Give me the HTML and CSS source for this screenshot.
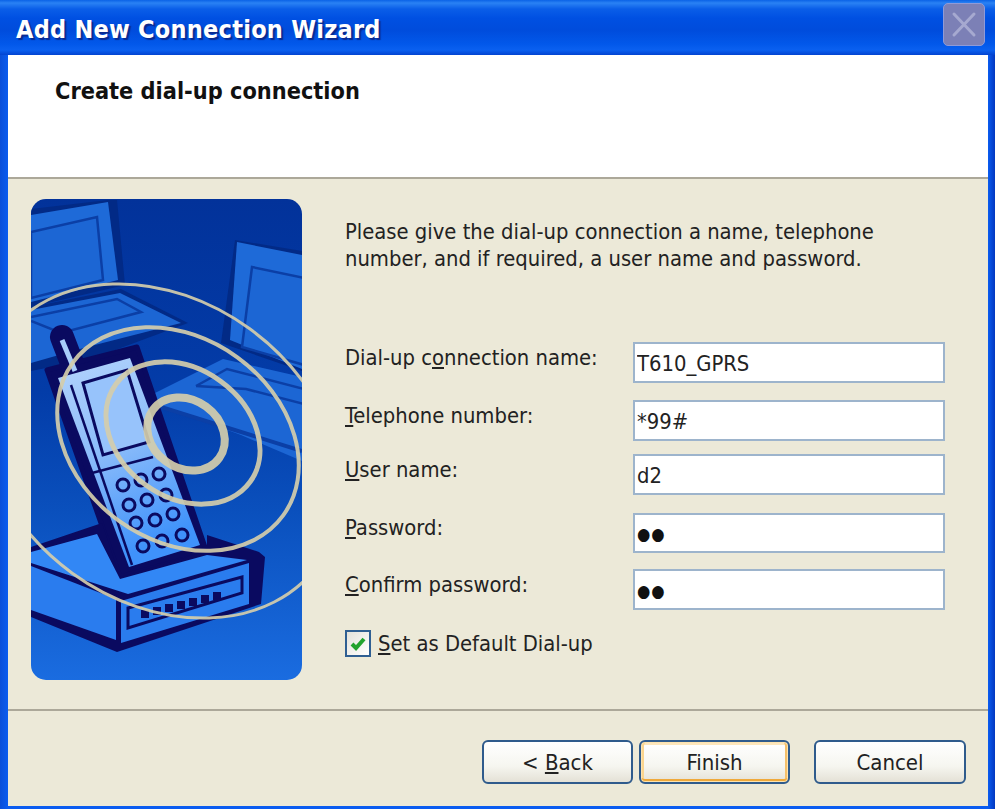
FILE: index.html
```html
<!DOCTYPE html>
<html lang="en">
<head>
<meta charset="utf-8">
<title>Add New Connection Wizard</title>
<link rel="stylesheet" href="styles.css">
</head>
<body>
<div class="window">
  <div class="titlebar">
    <span class="title">Add New Connection Wizard</span>
    <span class="close">
      <svg viewBox="0 0 42 43" width="42" height="43"><path d="M11 11 L31 32 M31 11 L11 32" stroke="#a6a9d0" stroke-width="3" fill="none" stroke-linecap="round"/></svg>
    </span>
  </div>
  <div class="client">
    <div class="header"><h1 class="heading">Create dial-up connection</h1></div>
    <div class="main">
      <svg class="art" viewBox="0 0 271 481" width="271" height="481">
        <defs>
          <linearGradient id="bg" x1="0" y1="0" x2="0" y2="1">
            <stop offset="0" stop-color="#02329a"/>
            <stop offset="0.4" stop-color="#033ca8"/>
            <stop offset="0.65" stop-color="#0a50bd"/>
            <stop offset="1" stop-color="#1a6ce0"/>
          </linearGradient>
          <linearGradient id="face" x1="0" y1="0" x2="0.3" y2="1">
            <stop offset="0" stop-color="#b4d4fc"/>
            <stop offset="0.5" stop-color="#8bbcfa"/>
            <stop offset="1" stop-color="#3f92fb"/>
          </linearGradient>
        </defs>
        <rect width="271" height="481" fill="url(#bg)"/>
        <polygon points="0,10 77,1 86,1 94,86 0,108" fill="#022a86"/>
        <polygon points="0,16 77,3 87,81 0,103" fill="#1e6ad8"/>
        <polygon points="0,33 66,18 72,81 0,99" fill="#1c66d4" stroke="#0b3fa6" stroke-width="2.5"/>
        <polygon points="0,108 90,90 157,124 60,160 0,172" fill="#022a86"/>
        <polygon points="0,111 89,94 150,124 56,148 0,164" fill="#1c66d4"/>
        <polyline points="0,118 86,100 110,113 30,134 0,122" fill="none" stroke="#0b3fa6" stroke-width="2.5"/>
        <polygon points="204,41 271,52 271,172 190,144" fill="#022a86"/>
        <polygon points="206,43 271,56 271,170 199,141" fill="#1e6ad8"/>
        <polygon points="221,68 273,79 273,166 211,148" fill="#1c66d4" stroke="#0b3fa6" stroke-width="2.5"/>
        <polygon points="112,200 192,160 271,178 271,262 210,236" fill="#1c66d4"/>
        <polyline points="165,187 196,170 273,190 273,205 215,190 165,187" fill="none" stroke="#0b3fa6" stroke-width="2.5"/>
        <line x1="130" y1="208" x2="271" y2="252" stroke="#0b3fa6" stroke-width="4"/>

        <line x1="31" y1="138" x2="44" y2="172" stroke="#0a0a60" stroke-width="24" stroke-linecap="round"/>
        <polygon points="16,171 106,148 176,354 89,378" fill="#0a0a60" stroke="#0a0a60" stroke-width="5" stroke-linejoin="round"/>
        <polygon points="27,179 99,159 169,346 98,368" fill="url(#face)"/>
        <line x1="31" y1="141" x2="44" y2="172" stroke="#a8cdfb" stroke-width="5"/>
        <line x1="40" y1="186" x2="101" y2="366" stroke="#0a0a60" stroke-width="2.5"/>
        <polygon points="52,184 96,171 118,243 72,256" fill="#97c3fb" stroke="#0a0a60" stroke-width="3"/>
        <line x1="61" y1="274" x2="122" y2="258" stroke="#0a0a60" stroke-width="2.5"/>
        <g fill="none" stroke="#0a0a60" stroke-width="3">
          <circle cx="92" cy="286" r="6"/><circle cx="110" cy="281" r="6"/><circle cx="128" cy="275" r="6"/>
          <circle cx="98" cy="306" r="6"/><circle cx="116" cy="301" r="6"/><circle cx="135" cy="296" r="6"/>
          <circle cx="105" cy="324" r="6"/><circle cx="124" cy="321" r="6"/><circle cx="142" cy="315" r="6"/>
          <circle cx="112" cy="347" r="6"/><circle cx="131" cy="342" r="6"/><circle cx="151" cy="336" r="6"/>
        </g>

        <polygon points="0,348 71,324 89,378 176,352 176,336 228,353 234,358 230,405 86,453 0,418" fill="#0a0a60" stroke-linejoin="round"/>
        <polygon points="0,353 66,335 89,380 176,356 216,361 97,395 0,364" fill="#3287f5"/>
        <polygon points="0,367 85,400 85,441 0,411" fill="#2a7cee"/>
        <polygon points="90,402 218,364 218,405 90,444" fill="#2a7cee"/>
        <polygon points="97,409 211,378 211,394 97,429" fill="#2a7cee" stroke="#0a0a60" stroke-width="3"/>
        <g fill="#0a0a60">
          <rect x="110" y="411" width="8" height="8"/><rect x="122" y="408" width="8" height="8"/>
          <rect x="134" y="405" width="8" height="8"/><rect x="146" y="402" width="8" height="8"/>
          <rect x="158" y="399" width="8" height="8"/><rect x="170" y="396" width="8" height="8"/>
          <rect x="182" y="393" width="8" height="8"/>
        </g>
        <g fill="none" stroke="#d4cdab" stroke-opacity="0.92">
          <ellipse cx="155" cy="235" rx="41" ry="34" stroke-width="8" transform="rotate(36 155 235)"/>
          <ellipse cx="152" cy="234" rx="83" ry="64" stroke-width="5" transform="rotate(36 152 234)"/>
          <ellipse cx="147" cy="240" rx="130" ry="101" stroke-width="4" transform="rotate(36 147 240)"/>
          <ellipse cx="130" cy="252" rx="194" ry="151" stroke-width="3" transform="rotate(36 130 252)"/>
        </g>
      </svg>
      <form class="content">
        <p class="intro">Please give the dial-up connection a name, telephone number, and if required, a user name and password.</p>
        <div class="fields">
          <div class="row row-name">
            <label class="label" for="f1">Dial-up c<u>o</u>nnection name:</label>
            <input class="input" id="f1" type="text" value="T610_GPRS">
          </div>
          <div class="row row-tel">
            <label class="label" for="f2"><u>T</u>elephone number:</label>
            <input class="input" id="f2" type="text" value="*99#">
          </div>
          <div class="row row-user">
            <label class="label" for="f3"><u>U</u>ser name:</label>
            <input class="input" id="f3" type="text" value="d2">
          </div>
          <div class="row row-pass">
            <label class="label" for="f4"><u>P</u>assword:</label>
            <input class="input input-secret" id="f4" type="text" value="●●">
          </div>
          <div class="row row-conf">
            <label class="label" for="f5"><u>C</u>onfirm password:</label>
            <input class="input input-secret" id="f5" type="text" value="●●">
          </div>
        </div>
        <div class="check">
          <span class="box">
            <svg viewBox="0 0 20 20" width="20" height="20"><path d="M4 10 L8 14 L16 5" fill="none" stroke="#22a32e" stroke-width="4"/></svg>
          </span>
          <span class="check-text"><u>S</u>et as Default Dial-up</span>
        </div>
      </form>
    </div>
    <div class="footer">
      <button class="btn" type="button">&lt; <u>B</u>ack</button>
      <button class="btn btn-default" type="button">Finish</button>
      <button class="btn btn-cancel" type="button">Cancel</button>
    </div>
  </div>
</div>
</body>
</html>
```
FILE: styles.css
```css
* { box-sizing: border-box; }
html, body { margin: 0; padding: 0; }
body {
  width: 995px;
  height: 809px;
  overflow: hidden;
  font-family: "DejaVu Sans Condensed", "DejaVu Sans", sans-serif;
  font-stretch: condensed;
  color: #111;
}
.window {
  width: 995px;
  height: 809px;
  display: flex;
  flex-direction: column;
  background: linear-gradient(90deg, #0a4fd8 0, #0a5cf0 8px, #0a5cf0 988px, #0338c0 995px);
}
.titlebar {
  height: 55px;
  flex: none;
  display: flex;
  align-items: center;
  justify-content: space-between;
  padding: 0 10px 0 16px;
  background: linear-gradient(180deg, #0a62e6 0, #2a82f4 3px, #0a5ee8 9px, #0050e2 18px, #004cdc 30px, #0258ea 44px, #0a60f0 50px, #0344d0 55px);
}
.title {
  color: #fff;
  font-size: 25px;
  font-weight: 700;
  letter-spacing: 0.25px;
  padding-top: 3px;
  text-shadow: 2px 2px 1px #0a2a90;
  white-space: nowrap;
}
.close {
  width: 42px;
  height: 43px;
  margin-top: -7px;
  background: #7c80b6;
  border: 1px solid #8f9ad8;
  border-radius: 5px;
  display: flex;
}
.close svg { margin: -1px; flex: none; }
.client {
  flex: 1;
  margin: 0 7px 3px 8px;
  background: #ece9d8;
  display: flex;
  flex-direction: column;
  min-height: 0;
}
.header {
  height: 124px;
  flex: none;
  background: #fff;
  border-bottom: 2px solid #aca899;
  padding: 22px 0 0 47px;
}
.heading {
  margin: 0;
  font-size: 23.3px;
  line-height: 28px;
  font-weight: 700;
  color: #111;
}
.main {
  height: 530px;
  flex: none;
  display: flex;
  padding: 20px 0 0 23px;
}
.art {
  flex: none;
  display: block;
  border-radius: 15px;
}
.content {
  margin: 0 0 0 43px;
  width: 600px;
  font-size: 21.8px;
}
.intro {
  margin: 19px 0 0;
  width: 560px;
  line-height: 27px;
  color: #222;
}
.fields {
  margin-top: 70px;
  display: flex;
  flex-direction: column;
}
.row {
  display: flex;
  align-items: center;
  justify-content: space-between;
  width: 600px;
  height: 41px;
}
.row-tel { margin-top: 17px; }
.row-user { margin-top: 13px; }
.row-pass { margin-top: 18px; height: 40px; }
.row-conf { margin-top: 16px; }
.label {
  color: #222;
  line-height: 24px;
  position: relative;
  top: -5px;
  white-space: nowrap;
}
.input {
  width: 312px;
  height: 100%;
  border: 2px solid #9db4cc;
  background: #fff;
  padding: 2px 2px 0;
  font: inherit;
  font-stretch: condensed;
  color: #222;
  outline: none;
}
.input-secret {
  font-size: 17px;
  letter-spacing: 1px;
  color: #111;
}
.check {
  margin-top: 20px;
  display: flex;
  align-items: center;
  gap: 7px;
}
.box {
  width: 26px;
  height: 27px;
  border: 2px solid #2f5f92;
  background: linear-gradient(135deg, #e4e2da, #fff);
  display: flex;
  align-items: center;
  justify-content: center;
}
.check-text { color: #222; }
.footer {
  flex: 1;
  border-top: 2px solid #aca899;
  display: flex;
  align-items: flex-start;
  padding: 29px 0 0 474px;
}
.btn {
  width: 151px;
  height: 44px;
  border: 2px solid #2f5b8c;
  border-radius: 6px;
  background: linear-gradient(180deg, #ffffff 0, #f6f6f0 60%, #e4e1d6 100%);
  font: inherit;
  font-size: 22px;
  font-stretch: condensed;
  color: #222;
  padding: 0;
}
.btn-default {
  margin-left: 6px;
  box-shadow: inset 0 0 0 1px #fde3ae, inset 0 -3px 0 #f0a93a, inset 3px 0 0 #fbd58e, inset -3px 0 0 #f5c06a, inset 0 3px 0 #fde6bb;
}
.btn-cancel { margin-left: 24px; width: 152px; }
```
